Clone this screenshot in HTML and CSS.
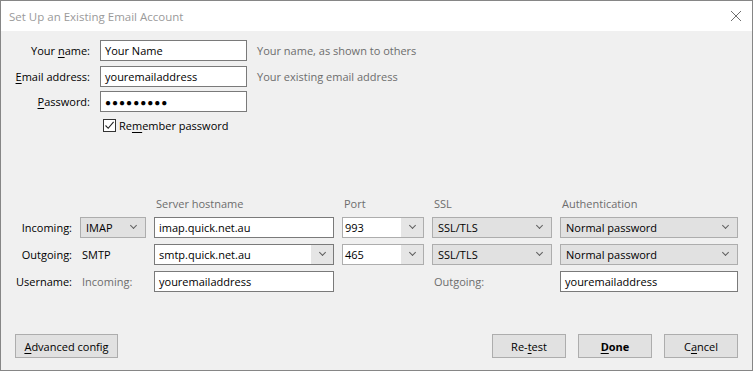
FILE: index.html
```html
<!DOCTYPE html>
<html lang="en">

<head>
	<meta charset="utf-8">
	<title>Set Up an Existing Email Account</title>
	<link rel="stylesheet" href="styles.css">
</head>

<body>
	<div class="window">
		<div class="titlebar">
			<span class="title">Set Up an Existing Email Account</span>
			<svg class="close" width="12" height="12" viewBox="0 0 12 12">
				<path d="M1 1 L11 11 M11 1 L1 11" stroke="#6f6f6f" stroke-width="1" fill="none" />
			</svg>
		</div>

		<div class="content">
			<!-- identity -->
			<div class="identity">
				<label class="label">Your <u>n</u>ame:</label>
				<div class="textbox">Your Name</div>
				<span class="hint">Your name, as shown to others</span>

				<label class="label"><u>E</u>mail address:</label>
				<div class="textbox">youremailaddress</div>
				<span class="hint">Your existing email address</span>

				<label class="label"><u>P</u>assword:</label>
				<div class="textbox password">&#9679;&#9679;&#9679;&#9679;&#9679;&#9679;&#9679;&#9679;&#9679;</div>
				<span></span>

				<span></span>
				<div class="remember">
					<span class="checkbox">
						<svg width="11" height="11" viewBox="0 0 11 11">
							<path d="M1.5 5.5 L4.2 8.3 L9.6 1.8" stroke="#222" stroke-width="1.1" fill="none" />
						</svg>
					</span>
					<span>Re<u>m</u>ember password</span>
				</div>
				<span></span>
			</div>

			<!-- server settings -->
			<div class="servers">
				<span></span>
				<span></span>
				<span class="head">Server hostname</span>
				<span class="head">Port</span>
				<span class="head">SSL</span>
				<span class="head">Authentication</span>

				<span class="rowlabel">Incoming:</span>
				<div class="select">IMAP<i class="chev"></i></div>
				<div class="textbox">imap.quick.net.au</div>
				<div class="combo light"><span class="val">993</span><span class="drop"><i class="chev"></i></span></div>
				<div class="select">SSL/TLS<i class="chev"></i></div>
				<div class="select">Normal password<i class="chev"></i></div>

				<span class="rowlabel">Outgoing:</span>
				<span class="plain">SMTP</span>
				<div class="combo"><span class="val">smtp.quick.net.au</span><span class="drop"><i class="chev"></i></span></div>
				<div class="combo light"><span class="val">465</span><span class="drop"><i class="chev"></i></span></div>
				<div class="select">SSL/TLS<i class="chev"></i></div>
				<div class="select">Normal password<i class="chev"></i></div>

				<span class="rowlabel">Username:</span>
				<span class="plain muted">Incoming:</span>
				<div class="textbox">youremailaddress</div>
				<span></span>
				<span class="plain muted">Outgoing:</span>
				<div class="textbox">youremailaddress</div>
			</div>

			<!-- buttons -->
			<div class="buttons">
				<button class="btn wide"><u>A</u>dvanced config</button>
				<div class="right">
					<button class="btn">Re-<u>t</u>est</button>
					<button class="btn default"><u>D</u>one</button>
					<button class="btn">C<u>a</u>ncel</button>
				</div>
			</div>
		</div>
	</div>
</body>

</html>
```

FILE: styles.css
```css
/* common css */
* {
	margin: 0;
	padding: 0;
	box-sizing: border-box;
}

body {
	font-family: 'Open Sans', 'Noto Sans', sans-serif;
	font-size: 11px;
	color: #000;
	width: 753px;
	height: 371px;
	overflow: hidden;
}

u {
	text-decoration: underline;
	text-underline-offset: 2px;
}

/* window frame */
.window {
	width: 753px;
	height: 371px;
	border: 1px solid #868686;
	display: flex;
	flex-direction: column;
	background-color: #f0f0f0;
}

.titlebar {
	height: 30px;
	background-color: #fff;
	display: flex;
	align-items: center;
	justify-content: space-between;
	padding: 0 10px 0 8px;
}

.title {
	color: #9a9a9a;
	font-size: 11.5px;
}

.content {
	flex: 1;
	display: flex;
	flex-direction: column;
	padding: 9px 14px 12px 7px;
}

/* identity block */
.identity {
	display: grid;
	grid-template-columns: 82px 147px auto;
	column-gap: 10px;
	row-gap: 4.5px;
	align-items: center;
}

.label {
	text-align: right;
}

.hint {
	color: #6d6d6d;
}

.textbox {
	height: 21px;
	background-color: #fff;
	border: 1px solid #7a7a7a;
	padding: 0 4px;
	display: flex;
	align-items: center;
	white-space: nowrap;
	overflow: hidden;
}

.password {
	font-size: 10px;
	letter-spacing: 1px;
}

.remember {
	display: flex;
	align-items: center;
	gap: 3px;
	padding-left: 3px;
	margin-top: 1px;
}

.checkbox {
	width: 13px;
	height: 13px;
	border: 1px solid #333;
	background-color: #fff;
	display: flex;
	align-items: center;
	justify-content: center;
}

/* server settings */
.servers {
	margin-top: 63px;
	display: grid;
	grid-template-columns: 64px 66px 180px 82px 120px 178px;
	grid-template-rows: 15px 21px 21px 21px;
	column-gap: 8px;
	row-gap: 6px;
	align-items: center;
}

.head {
	color: #6d6d6d;
	padding-left: 2px;
}

.rowlabel {
	text-align: right;
}

.plain {
	padding-left: 2px;
}

.muted {
	color: #6d6d6d;
}

.select {
	height: 21px;
	background-color: #e1e1e1;
	border: 1px solid #adadad;
	padding: 0 5px;
	display: flex;
	align-items: center;
	justify-content: space-between;
}

.chev {
	width: 5px;
	height: 5px;
	border-right: 1px solid #606060;
	border-bottom: 1px solid #606060;
	transform: rotate(45deg);
	margin: -3px 4px 0 0;
}

.combo {
	height: 21px;
	border: 1px solid #7a7a7a;
	background-color: #fff;
	display: flex;
}

.combo.light {
	border-color: #adadad;
}

.combo .val {
	flex: 1;
	display: flex;
	align-items: center;
	padding-left: 4px;
}

.combo.light .val {
	padding-left: 2px;
}

.combo .drop {
	width: 22px;
	background-color: #e5e5e5;
	display: flex;
	align-items: center;
	justify-content: center;
}

.combo .drop .chev {
	margin: -3px 0 0 0;
}

/* bottom buttons */
.buttons {
	margin-top: auto;
	display: flex;
	justify-content: space-between;
	padding-left: 7px;
}

.right {
	display: flex;
	gap: 12px;
}

.btn {
	font-family: inherit;
	font-size: 11px;
	height: 24px;
	width: 74px;
	background-color: #e1e1e1;
	border: 1px solid #adadad;
	color: #000;
}

.btn.wide {
	width: 103px;
}

.btn.default {
	font-weight: bold;
}
```
